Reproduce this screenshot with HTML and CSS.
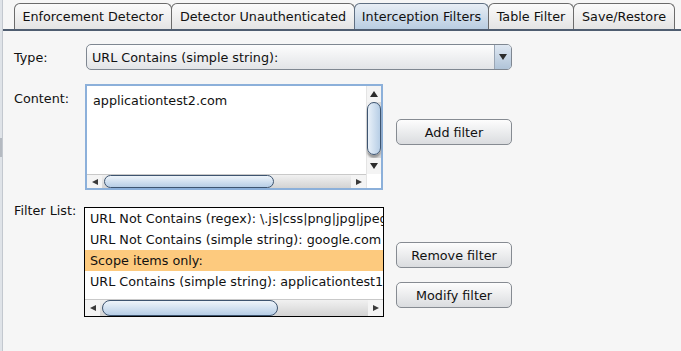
FILE: index.html
```html
<!DOCTYPE html>
<html>
<head>
<meta charset="utf-8">
<link rel="stylesheet" href="styles.css">
</head>
<body>
<div class="page">
  <div class="strip"><div class="grip"></div></div>
  <div class="main">
    <div class="tabs">
      <div class="tab t1">Enforcement Detector</div>
      <div class="tab t2">Detector Unauthenticated</div>
      <div class="tab t3 active">Interception Filters</div>
      <div class="tab t4">Table Filter</div>
      <div class="tab t5">Save/Restore</div>
    </div>
    <div class="panel">
      <div class="label l-type">Type:</div>
      <div class="combo">
        <div class="combo-text">URL Contains (simple string):</div>
        <div class="combo-btn"><span class="tri-down"></span></div>
      </div>

      <div class="label l-content">Content:</div>
      <div class="textarea">
        <div class="ta-body">
          <div class="ta-text">applicationtest2.com</div>
          <div class="vscroll">
            <div class="arrow-box"><span class="tri-up"></span></div>
            <div class="vtrack"><div class="vthumb"></div></div>
            <div class="arrow-box"><span class="tri-down"></span></div>
          </div>
        </div>
        <div class="hrow">
          <div class="hscroll">
            <div class="arrow-box h"><span class="tri-left"></span></div>
            <div class="htrack"><div class="hthumb ta-thumb"></div></div>
            <div class="arrow-box h"><span class="tri-right"></span></div>
          </div>
          <div class="corner"></div>
        </div>
      </div>
      <div class="btncol b1">
        <div class="btn add">Add filter</div>
      </div>

      <div class="label l-list">Filter List:</div>
      <div class="list">
        <div class="rows">
          <div class="row">URL Not Contains (regex): \.js|css|png|jpg|jpeg|gif</div>
          <div class="row">URL Not Contains (simple string): google.com</div>
          <div class="row sel">Scope items only:</div>
          <div class="row">URL Contains (simple string): applicationtest1.com</div>
        </div>
        <div class="hscroll list-h">
          <div class="arrow-box h"><span class="tri-left"></span></div>
          <div class="htrack"><div class="hthumb list-thumb"></div></div>
          <div class="arrow-box h"><span class="tri-right"></span></div>
        </div>
      </div>
      <div class="btncol b2">
        <div class="btn remove">Remove filter</div>
        <div class="btn modify">Modify filter</div>
      </div>
    </div>
  </div>
</div>
</body>
</html>
```
FILE: styles.css
```css
html, body {
  margin: 0;
  padding: 0;
  background: #f6f6f6;
  font-family: "DejaVu Sans", "Liberation Sans", sans-serif;
  font-size: 12.75px;
  color: #111;
}
.page {
  display: flex;
  width: 681px;
  height: 351px;
  overflow: hidden;
}
.strip {
  width: 2px;
  background: #dfe3e8;
  border-right: 1px solid #c3c8cf;
  display: flex;
  flex-direction: column;
  padding-top: 138px;
}
.grip {
  height: 19px;
  width: 2px;
  background: #b5bac1;
}
.main {
  flex: 1;
  display: flex;
  flex-direction: column;
}
.tabs {
  display: flex;
  padding: 3px 0 0 11px;
  height: 26px;
  border-bottom: 2px solid #4f5d70;
}
.tab {
  box-sizing: border-box;
  height: 26px;
  border: 1px solid #6b6b6b;
  border-bottom: none;
  border-radius: 6px 6px 0 0;
  background: linear-gradient(#fbfbfb, #e4e4e4);
  display: flex;
  align-items: center;
  justify-content: center;
  margin-right: -1px;
  white-space: nowrap;
}
.t1 { width: 158px; }
.t2 { width: 184px; }
.t3 { width: 135px; }
.t4 { width: 86px; }
.t5 { width: 102px; }
.tab.active {
  background: linear-gradient(#e8eef5, #b9cde1);
  border-color: #5f6f82;
}
.panel {
  display: grid;
  grid-template-columns: 59px 299px 116px;
  grid-template-rows: 26px 106px 110px;
  column-gap: 12px;
  row-gap: 14px;
  padding: 13px 0 0 11px;
}
.label {
  line-height: 15px;
  white-space: nowrap;
}
.l-type { align-self: center; }
.l-content { padding-top: 7px; }
.l-list { transform: translateY(-1px); }
.combo {
  grid-column: 2 / 4;
  margin-left: 1px;
  box-sizing: border-box;
  height: 26px;
  border: 1px solid #7f8791;
  border-radius: 5px;
  background: linear-gradient(#fdfdfd, #e2e4e7);
  display: flex;
  overflow: hidden;
}
.combo-text {
  flex: 1;
  padding-left: 5px;
  display: flex;
  align-items: center;
}
.combo-btn {
  width: 16px;
  border-left: 1px solid #9aa6b5;
  background: linear-gradient(#dfe8f2, #b0c4d8);
  display: flex;
  align-items: center;
  justify-content: center;
}
.tri-down, .tri-up, .tri-left, .tri-right {
  display: block;
  width: 0;
  height: 0;
}
.tri-down {
  border-left: 4px solid transparent;
  border-right: 4px solid transparent;
  border-top: 6px solid #2c2c2c;
}
.tri-up {
  border-left: 4px solid transparent;
  border-right: 4px solid transparent;
  border-bottom: 6px solid #2c2c2c;
}
.tri-left {
  border-top: 3px solid transparent;
  border-bottom: 3px solid transparent;
  border-right: 6px solid #3a3a3a;
}
.tri-right {
  border-top: 3px solid transparent;
  border-bottom: 3px solid transparent;
  border-left: 6px solid #3a3a3a;
}
.textarea {
  box-sizing: border-box;
  height: 106px;
  border: 2px solid #8cb0da;
  background: #fff;
  display: flex;
  flex-direction: column;
  margin-right: 1px;
}
.ta-body {
  flex: 1;
  display: flex;
}
.ta-text {
  flex: 1;
  padding: 7px 0 0 6px;
  line-height: 15px;
}
.vscroll {
  width: 14px;
  display: flex;
  flex-direction: column;
  background: linear-gradient(90deg, #f3f3f3, #d6d6d6);
  border-left: 1px solid #e4e4e4;
}
.arrow-box {
  height: 16px;
  display: flex;
  align-items: center;
  justify-content: center;
  background: #f4f4f4;
}
.arrow-box.h {
  width: 15px;
  height: auto;
}
.vtrack {
  flex: 1;
  display: flex;
  flex-direction: column;
}
.vthumb {
  height: 53px;
  box-sizing: border-box;
  border: 1px solid #3d5470;
  border-radius: 8px;
  background: linear-gradient(90deg, #e9f1f9, #b7cee6);
  box-shadow: 0 3px 2px #9a9a9a;
}
.hrow {
  display: flex;
  height: 14px;
}
.hscroll {
  flex: 1;
  display: flex;
  background: linear-gradient(#f1f1f1, #d3d3d3);
  border-top: 1px solid #c9c9c9;
}
.htrack {
  flex: 1;
  display: flex;
  padding-left: 2px;
}
.hthumb {
  box-sizing: border-box;
  border: 1px solid #3d5470;
  border-radius: 8px;
  background: linear-gradient(#eef4fa, #b7cee6);
}
.ta-thumb { width: 170px; }
.list-thumb { width: 176px; }
.corner {
  width: 14px;
  background: #fff;
  border-left: 1px solid #e4e4e4;
}
.list {
  box-sizing: border-box;
  height: 110px;
  margin-left: -1px;
  border: 1px solid #000;
  background: #fff;
  display: flex;
  flex-direction: column;
  margin-top: 3px;
}
.rows {
  flex: 1;
  overflow: hidden;
}
.row {
  height: 21px;
  line-height: 21px;
  padding-left: 5px;
  white-space: nowrap;
  overflow: hidden;
}
.row.sel {
  background: #fdca7e;
}
.list-h {
  flex: none;
  height: 16px;
}
.btncol {
  display: flex;
  flex-direction: column;
}
.btn {
  box-sizing: border-box;
  height: 26px;
  border: 1px solid #868b92;
  border-radius: 5px;
  background: linear-gradient(#fdfdfd, #dadcdf);
  display: flex;
  align-items: center;
  justify-content: center;
}
.b1 .add { margin-top: 35px; }
.b2 .remove { margin-top: 38px; }
.b2 .modify { margin-top: 14px; }
```
